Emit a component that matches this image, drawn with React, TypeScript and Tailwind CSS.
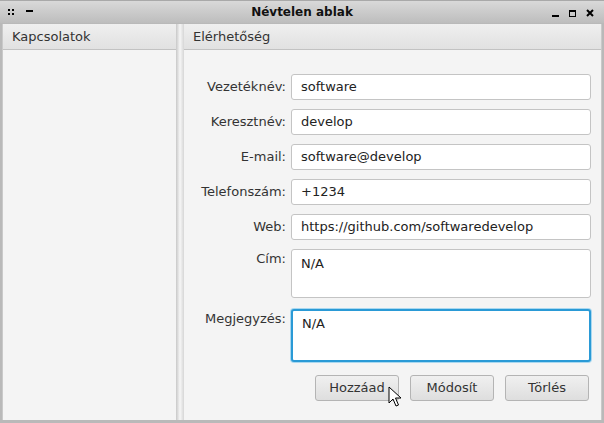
import React from "react";

const fields = [
  { label: "Vezetéknév:", value: "software" },
  { label: "Keresztnév:", value: "develop" },
  { label: "E-mail:", value: "software@develop" },
  { label: "Telefonszám:", value: "+1234" },
  { label: "Web:", value: "https://github.com/softwaredevelop" },
];

const Header: React.FC<{ title: string }> = ({ title }) => (
  <div className="h-[26px] flex items-center px-[9px] bg-gradient-to-b from-[#efefef] to-[#e1e1e1] border-b border-[#c2c2c2] text-[#333] text-[13px]">
    {title}
  </div>
);

const Button: React.FC<{ label: string }> = ({ label }) => (
  <button className="w-[84px] h-[26px] rounded-[3px] border border-[#b4b4b4] bg-gradient-to-b from-[#f0f0f0] to-[#dedede] text-[13px] text-[#333]">
    {label}
  </button>
);

export default function App() {
  return (
    <div
      className="w-[604px] h-[423px] bg-[#b9b9b9] flex flex-col overflow-hidden relative"
      style={{ fontFamily: '"DejaVu Sans", sans-serif' }}
    >
      <div className="h-[23px] shrink-0 flex items-center relative bg-gradient-to-b from-[#d9d9d9] to-[#bdbdbd] border-t border-[#a9a9a9]">
        <div className="absolute left-[8px] top-[8px] grid grid-cols-2 gap-[2px]">
          <span className="w-[2px] h-[2px] bg-black" />
          <span className="w-[2px] h-[2px] bg-black" />
          <span className="w-[2px] h-[2px] bg-black" />
          <span className="w-[2px] h-[2px] bg-black" />
        </div>
        <div className="absolute left-[26px] top-[9px] w-[7px] h-[2px] bg-black" />
        <div className="flex-1 text-center font-bold text-[12px] text-[#111]">Névtelen ablak</div>
        <div className="absolute right-[10px] top-[7px] flex items-end gap-[10px]">
          <span className="w-[7px] h-[2px] bg-black mt-[7px] mb-[1px]" />
          <span className="w-[7px] h-[7px] border border-black border-t-2 mb-[1px]" />
          <svg width="8" height="8" viewBox="0 0 8 8" className="mb-[1px]">
            <path d="M1 1L7 7M7 1L1 7" stroke="black" strokeWidth="2" />
          </svg>
        </div>
      </div>
      <div className="flex-1 flex px-[2px] pb-[3px] pt-[1px]">
        <div className="w-[174px] flex flex-col bg-[#f4f4f4] border-l border-[#c9c9c9]">
          <Header title="Kapcsolatok" />
          <div className="flex-1" />
        </div>
        <div className="w-[8px] bg-gradient-to-r from-[#c8c8c8] via-[#f6f6f6] to-[#d6d6d6]" />
        <div className="flex-1 flex flex-col bg-[#f4f4f4] border-r border-[#c9c9c9]">
          <Header title="Elérhetőség" />
          <div className="flex flex-col pt-[24px] pl-[10px] pr-[10px] gap-[9px] text-[13px] text-[#333]">
            {fields.map((f) => (
              <div key={f.label} className="flex items-center gap-[5px]">
                <div className="w-[92px] text-right">{f.label}</div>
                <div className="flex-1 h-[26px] flex items-center px-[9px] bg-white border border-[#c4c4c4] rounded-[3px] text-[#222]">
                  {f.value}
                </div>
              </div>
            ))}
            <div className="flex items-start gap-[5px]">
              <div className="w-[92px] text-right">Cím:</div>
              <div className="flex-1 h-[49px] px-[9px] pt-[4px] bg-white border border-[#c4c4c4] rounded-[3px] text-[#222]">
                N/A
              </div>
            </div>
            <div className="flex items-start gap-[5px] mt-[2px]">
              <div className="w-[92px] text-right">Megjegyzés:</div>
              <div className="flex-1 h-[53px] px-[9px] pt-[3px] bg-white border-2 border-[#2a9ad6] rounded-[3px] text-[#222] shadow-[0_0_0_1px_#a9d8f0]">
                N/A
              </div>
            </div>
            <div className="flex justify-end gap-[11px] mt-[4px] pr-[2px]">
              <Button label="Hozzáad" />
              <Button label="Módosít" />
              <Button label="Törlés" />
            </div>
          </div>
        </div>
      </div>
      <svg className="absolute left-[388px] top-[386px]" width="14" height="22" viewBox="0 0 14 22">
        <path d="M1 1L1 17L5 13L8 20L10.5 19L7.5 12L13 12Z" fill="white" stroke="black" strokeWidth="1" strokeLinejoin="round" />
      </svg>
    </div>
  );
}
